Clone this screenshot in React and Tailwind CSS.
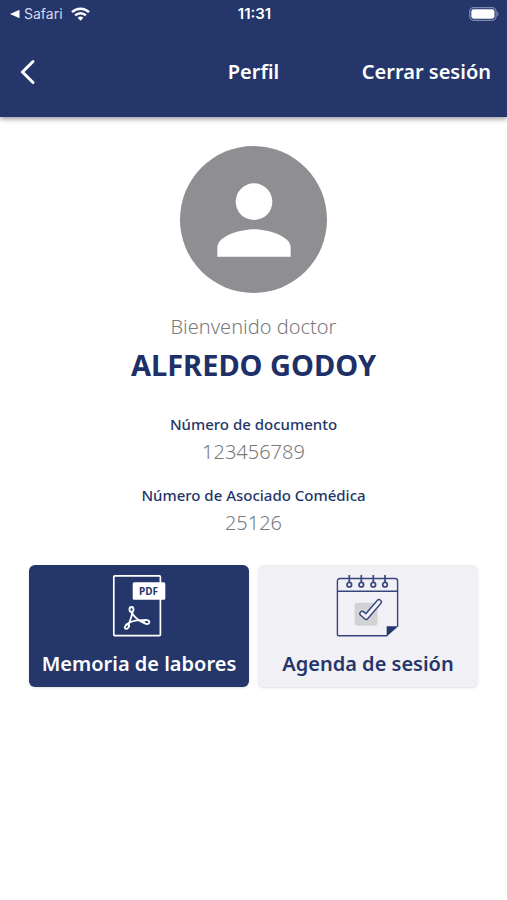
import React from "react";

const doctor = {
  name: "ALFREDO GODOY",
  fields: [
    { label: "Número de documento", value: "123456789" },
    { label: "Número de Asociado Comédica", value: "25126" },
  ],
};

const StatusBar = () => (
  <div className="grid grid-cols-3 items-center h-7 pl-[10px] pr-2 text-white font-['Inter','Liberation_Sans',sans-serif]">
    <div className="flex items-center">
      <svg width="10" height="10" viewBox="0 0 10 10" fill="currentColor" aria-hidden="true">
        <path d="M0 5 9.5 0.8v8.4z" />
      </svg>
      <span className="ml-1 text-sm text-[#d3d9ea]">Safari</span>
      <svg className="ml-2" width="19" height="14" viewBox="0 0 19 14" fill="none" stroke="currentColor" strokeWidth="2.5" aria-hidden="true">
        <path d="M1 5.1a12.2 12.2 0 0 1 17 0" />
        <path d="M4.1 8.3a7.8 7.8 0 0 1 10.8 0" />
        <path d="M9.5 13.8 6.6 10.8a4.2 4.2 0 0 1 5.8 0z" fill="currentColor" stroke="none" />
      </svg>
    </div>
    <span className="text-center text-[15px] font-semibold">11:31</span>
    <svg className="justify-self-end" width="30" height="14" viewBox="0 0 30 14" aria-hidden="true">
      <rect x="0.7" y="0.7" width="26.4" height="12.6" rx="4" fill="none" stroke="#7f8bb0" strokeWidth="1.3" />
      <rect x="2.3" y="2.3" width="23.2" height="9.4" rx="2.4" fill="#fff" />
      <path d="M28.3 4.8c1.6.6 1.6 3.8 0 4.4z" fill="#7f8bb0" />
    </svg>
  </div>
);

const Navbar = () => (
  <nav className="grid grid-cols-[1fr_auto_1fr] items-center h-[89px] px-4 pb-[2px] text-xl font-semibold text-white">
    <button type="button" aria-label="Volver" className="justify-self-start p-1">
      <svg width="16" height="26" viewBox="0 0 16 26" fill="none" stroke="currentColor" strokeWidth="3" strokeLinecap="round" strokeLinejoin="miter" aria-hidden="true">
        <path d="M13 2.5 2.5 13 13 23.5" />
      </svg>
    </button>
    <h1>Perfil</h1>
    <button type="button" className="justify-self-end whitespace-nowrap">
      Cerrar sesión
    </button>
  </nav>
);

const Avatar = () => (
  <div className="flex items-center justify-center w-[147px] h-[147px] rounded-full bg-[#8f8e93]">
    <svg width="110" height="110" viewBox="0 0 24 24" fill="#fff" aria-hidden="true">
      <circle cx="12" cy="8" r="4" />
      <path d="M4 20v-2c0-2.66 5.33-4 8-4s8 1.34 8 4v2z" />
    </svg>
  </div>
);

const PdfIcon = () => (
  <svg width="54" height="64" viewBox="0 0 54 64" fill="none" stroke="#fff" aria-hidden="true">
    <rect x="1.8" y="1.8" width="46.6" height="59.8" rx="1" strokeWidth="1.7" />
    <rect x="20.7" y="8.3" width="32.6" height="17.4" rx="1.5" fill="#fff" stroke="none" />
    <text x="36.5" y="20.6" textAnchor="middle" fontSize="10" fontWeight="700" fill="#24366a" stroke="none">
      PDF
    </text>
    {/* acrobat mark: three loops joined by a triangle */}
    <g strokeWidth="1.8" strokeLinejoin="round" strokeLinecap="round">
      <ellipse cx="19.5" cy="35.5" rx="2" ry="2.5" />
      <ellipse cx="15" cy="52.6" rx="1.7" ry="2.5" transform="rotate(40 15 52.6)" />
      <ellipse cx="34.6" cy="48" rx="2.8" ry="1.9" transform="rotate(12 34.6 48)" />
      <path d="M20.4 37.8C19.8 42.5 17.8 47.5 16.4 51" />
      <path d="M19 37.5C21.5 42 26.5 46.8 32.5 49.2" />
      <path d="M14.2 50.6C18.5 47 26 45.6 33.5 46.2" />
    </g>
  </svg>
);

const CalendarIcon = () => (
  <svg width="64" height="64" viewBox="0 0 64 64" fill="none" stroke="#35467f" strokeWidth="1.4" aria-hidden="true">
    <path d="M61.6 52.5V7a2.5 2.5 0 0 0-2.5-2.5H3.9A2.5 2.5 0 0 0 1.4 7v53.5a1.2 1.2 0 0 0 1.2 1.2H51" />
    <path d="M1.4 17.3h60.2" />
    {[13.3, 25.3, 37.3, 49].map((x) => (
      <g key={x}>
        <path d={`M${x} 1v7.5`} strokeWidth="1.7" />
        <circle cx={x} cy="10.7" r="2.3" fill="#f1f0f5" strokeWidth="1.7" />
      </g>
    ))}
    <rect x="18.7" y="28.7" width="22.8" height="23" rx="3" fill="#d2d2d5" stroke="none" />
    <g strokeLinecap="round" strokeLinejoin="round">
      <path d="M26.2 39.6l3.9 3.4 12.9-15" strokeWidth="6" />
      <path d="M26.2 39.6l3.9 3.4 12.9-15" stroke="#f5f5f9" strokeWidth="3.2" />
    </g>
    <path d="M50.7 52.3h11.6L50.7 62.4z" fill="#24366a" stroke="none" />
  </svg>
);

const App = () => {
  return (
    <div className="min-h-screen bg-white font-['Noto_Sans','Open_Sans',sans-serif]">
      <header className="bg-[#24366a] shadow-[0_2px_5px_rgba(0,0,0,0.4)]">
        <StatusBar />
        <Navbar />
      </header>

      <main className="flex flex-col items-center px-[29px] pt-[29px]">
        <Avatar />
        <p className="mt-5 text-xl leading-7 font-light text-[#7a7a7d]">Bienvenido doctor</p>
        <h2 className="mt-1 text-[29px] leading-10 font-bold text-[#1e3068]">{doctor.name}</h2>

        <dl className="mt-[25px] flex flex-col gap-4 text-center">
          {doctor.fields.map((field) => (
            <div key={field.label}>
              <dt className="text-[15px] leading-7 font-medium text-[#24366a]">{field.label}</dt>
              <dd className="text-xl leading-[27px] font-light text-[#7a7a7d]">{field.value}</dd>
            </div>
          ))}
        </dl>

        <div className="mt-[29px] grid grid-cols-2 gap-[9px] w-full text-xl leading-7 font-semibold">
          <button
            type="button"
            className="flex flex-col items-center gap-3 pt-[9px] pb-[9px] rounded-md bg-[#24366a] text-white shadow-sm whitespace-nowrap"
          >
            <PdfIcon />
            Memoria de labores
          </button>
          <button
            type="button"
            className="flex flex-col items-center gap-3 pt-[9px] pb-[9px] rounded-md bg-[#f1f0f5] text-[#24366a] shadow-sm whitespace-nowrap"
          >
            <CalendarIcon />
            Agenda de sesión
          </button>
        </div>
      </main>
    </div>
  );
};

export default App;
